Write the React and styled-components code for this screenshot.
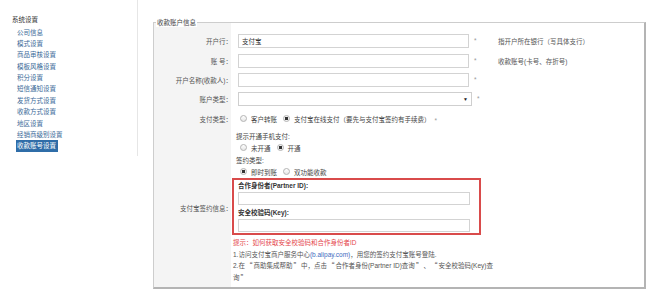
import React from "react";
import styled, { createGlobalStyle } from "styled-components";

const GlobalStyle = createGlobalStyle`
  html, body { margin: 0; padding: 0; background: #fff; }
  body {
    font-family: "Liberation Sans", "Noto Sans CJK SC", sans-serif;
    font-size: 6.5px;
    color: #444;
  }
  * { box-sizing: border-box; }
`;

const Page = styled.div`
  display: flex;
  align-items: flex-start;
  width: 655px;
  height: 301px;
  overflow: hidden;
`;

const Sidebar = styled.nav`
  width: 138px;
  flex: none;
  padding: 13.5px 0 4px 0;
  border-right: 1px solid #e6e6e6;
`;

const SideTitle = styled.div`
  padding-left: 12px;
  line-height: 11.4px;
  margin-bottom: 1.6px;
  color: #333;
`;

const SideItem = styled.div`
  padding-left: 16px;
  line-height: 11.4px;
  height: 11.4px;
`;

const SideLink = styled.span`
  display: inline-block;
  padding: 0 2px 0 1px;
  color: ${(p) => (p.$active ? "#fff" : "#3b6a98")};
  background: ${(p) => (p.$active ? "#2f6da8" : "transparent")};
`;

const Main = styled.main`
  flex: 1;
  padding: 17.5px 9px 0 15px;
`;

const Fieldset = styled.fieldset`
  margin: 0;
  padding: 0 1px 0 1px;
  min-width: 0;
  border: 1px solid #cdcdcd;
  border-right: 2px solid #b4b4b4;
  border-bottom: 2px solid #b4b4b4;
  background: linear-gradient(to right, #f4f4f4 77px, #fff 77px);
`;

const Legend = styled.legend`
  padding: 0 1px;
  margin-left: 1px;
  line-height: 9px;
  color: #444;
  background: #fff;
`;

const Form = styled.div`
  padding-top: 5px;
`;

const Row = styled.div`
  display: grid;
  grid-template-columns: 77px 261px 1fr;
  align-items: center;
  min-height: ${(p) => (p.$tall ? "auto" : "19.4px")};
`;

const Label = styled.div`
  text-align: right;
  color: #555;
  white-space: nowrap;
`;

const Cell = styled.div`
  display: flex;
  align-items: center;
  padding-left: ${(p) => p.$pad ?? 6}px;
`;

const TextInput = styled.input`
  width: ${(p) => p.$w || 231}px;
  height: ${(p) => p.$h || 14}px;
  border: 1px solid #d3d3d3;
  padding: 0 3px;
  font: inherit;
  color: #333;
  background: #fff;
  outline: none;
`;

const SelectBox = styled.div`
  width: 234px;
  height: 14px;
  border: 1px solid #cfcfcf;
  background: #fff;
  display: flex;
  align-items: center;
  justify-content: flex-end;
  padding-right: 3px;
`;

const Arrow = styled.span`
  font-size: 5px;
  color: #222;
`;

const Star = styled.span`
  margin-left: ${(p) => p.$ml ?? 5}px;
  color: #999;
  align-self: flex-start;
  margin-top: 3px;
`;

const Hint = styled.div`
  padding-left: 5px;
  color: #555;
`;

const Option = styled.label`
  display: inline-flex;
  align-items: center;
  margin-right: 6px;
  color: #444;
  white-space: nowrap;
`;

const Radio = styled.input.attrs({ type: "radio" })`
  appearance: none;
  -webkit-appearance: none;
  width: 7px;
  height: 7px;
  margin: 0 4px 0 0;
  border-radius: 50%;
  border: 1px solid #b3b3b3;
  background: ${(p) =>
    p.defaultChecked
      ? "radial-gradient(circle, #333 0 1.5px, #f2f2f2 1.9px)"
      : "linear-gradient(#fff, #e6e6e6)"};
`;

const SignCell = styled.div`
  padding: 3px 0 4px 0;
`;

const SubLabel = styled.div`
  padding-left: 4px;
  line-height: 11px;
  margin-top: ${(p) => p.$mt || 0}px;
  color: #444;
`;

const RadioGroup = styled.div`
  display: flex;
  align-items: center;
  height: 11px;
  padding-left: ${(p) => p.$pad ?? 8}px;
`;

const RedBox = styled.div`
  margin-top: 1px;
  width: 249px;
  border: 2px solid #d94b4b;
  padding: 0 0 1px 4px;
`;

const BoxLabel = styled.div`
  font-weight: bold;
  line-height: 12px;
  margin-top: ${(p) => p.$mt || 0}px;
  color: #333;
`;

const Help = styled.div`
  margin-top: 2px;
  padding-left: 1px;
  line-height: 11.5px;
  color: #555;
  white-space: nowrap;
`;

const RedTip = styled.div`
  color: #e5484d;
`;

const Link = styled.span`
  color: #3d6cc0;
`;

const Q = styled.span`
  font-family: "Noto Sans CJK SC", sans-serif;
  display: inline-block;
  width: 6.5px;
  text-align: ${(p) => (p.$close ? "left" : "right")};
  margin: 0 1px;
`;

const menu = [
  "公司信息",
  "模式设置",
  "商品审核设置",
  "模板风格设置",
  "积分设置",
  "短信通知设置",
  "发货方式设置",
  "收款方式设置",
  "地区设置",
  "经销商级别设置",
  "收款账号设置",
];

const textRows = [
  { label: "开户行：", value: "支付宝", hint: "指开户所在银行（写具体支行）" },
  { label: "账 号：", value: "", hint: "收款账号(卡号、存折号)" },
  { label: "开户名称(收款人)：", value: "", hint: "" },
];

export default function App() {
  return (
    <>
      <GlobalStyle />
      <Page>
        <Sidebar>
          <SideTitle>系统设置</SideTitle>
          {menu.map((m, i) => (
            <SideItem key={m}>
              <SideLink $active={i === menu.length - 1}>{m}</SideLink>
            </SideItem>
          ))}
        </Sidebar>
        <Main>
          <Fieldset>
            <Legend>收款账户信息</Legend>
            <Form>
              {textRows.map((r) => (
                <Row key={r.label}>
                  <Label>{r.label}</Label>
                  <Cell>
                    <TextInput defaultValue={r.value} />
                    <Star>*</Star>
                  </Cell>
                  <Hint>{r.hint}</Hint>
                </Row>
              ))}
              <Row>
                <Label>账户类型：</Label>
                <Cell>
                  <SelectBox role="combobox">
                    <Arrow>▼</Arrow>
                  </SelectBox>
                  <Star>*</Star>
                </Cell>
                <Hint />
              </Row>
              <Row>
                <Label>支付类型：</Label>
                <Cell $pad={8}>
                  <Option>
                    <Radio name="paytype" />
                    客户转账
                  </Option>
                  <Option>
                    <Radio name="paytype" defaultChecked />
                    支付宝在线支付（要先与支付宝签约有手续费）
                  </Option>
                  <Star $ml={-2}>*</Star>
                </Cell>
                <Hint />
              </Row>
              <Row $tall>
                <Label>支付宝签约信息：</Label>
                <SignCell>
                  <SubLabel>提示开通手机支付:</SubLabel>
                  <RadioGroup>
                    <Option>
                      <Radio name="mobile" />
                      未开通
                    </Option>
                    <Option>
                      <Radio name="mobile" defaultChecked />
                      开通
                    </Option>
                  </RadioGroup>
                  <SubLabel $mt={2}>签约类型:</SubLabel>
                  <RadioGroup>
                    <Option>
                      <Radio name="sign" defaultChecked />
                      即时到账
                    </Option>
                    <Option>
                      <Radio name="sign" />
                      双功能收款
                    </Option>
                  </RadioGroup>
                  <RedBox>
                    <BoxLabel>合作身份者(Partner ID):</BoxLabel>
                    <TextInput $w={232} $h={13} />
                    <BoxLabel $mt={2}>安全校验码(Key):</BoxLabel>
                    <TextInput $w={232} $h={13} />
                  </RedBox>
                  <Help>
                    <RedTip>提示：如何获取安全校验码和合作身份者ID</RedTip>
                    <div>
                      1.访问支付宝商户服务中心<Link>(b.alipay.com)</Link>，用您的签约支付宝账号登陆.
                    </div>
                    <div>
                      2.在<Q>“</Q>商助集成帮助<Q $close>”</Q>中，点击<Q>“</Q>合作者身份(Partner ID)查询<Q $close>”</Q>、<Q>“</Q>安全校验码(Key)查
                    </div>
                    <div>
                      询<Q $close>”</Q>
                    </div>
                  </Help>
                </SignCell>
                <Hint />
              </Row>
            </Form>
          </Fieldset>
        </Main>
      </Page>
    </>
  );
}
